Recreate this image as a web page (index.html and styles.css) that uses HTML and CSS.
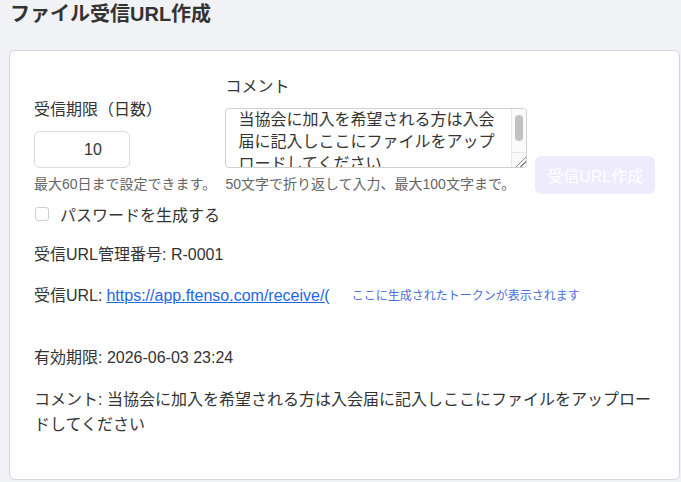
FILE: index.html
```html
<!DOCTYPE html>
<html lang="ja">
<head>
<meta charset="utf-8">
<title>ファイル受信URL作成</title>
<link rel="stylesheet" href="styles.css">
</head>
<body>
<h1 class="title">ファイル受信URL作成</h1>
<div class="card">
  <div class="form-row">
    <div class="field field-days">
      <label class="label">受信期限（日数）</label>
      <input class="days-input" type="text" value="10">
      <div class="help">最大60日まで設定できます。</div>
    </div>
    <div class="field field-comment">
      <label class="label">コメント</label>
      <div class="textarea-wrap">
        <textarea class="comment-input">当協会に加入を希望される方は入会届に記入しここにファイルをアップロードしてください</textarea>
        <div class="fake-scroll"><div class="fake-thumb"></div></div>
        <div class="fake-corner"></div>
      </div>
      <div class="help">50文字で折り返して入力、最大100文字まで。</div>
    </div>
    <button class="submit" type="button">受信URL作成</button>
  </div>
  <label class="check-row">
    <input class="check" type="checkbox">
    <span>パスワードを生成する</span>
  </label>
  <div class="result">
    <div class="line line-id">受信URL管理番号: R-0001</div>
    <div class="line line-url">受信URL: <a class="url" href="#">https://app.ftenso.com/receive/(</a><span class="token">ここに生成されたトークンが表示されます</span></div>
    <div class="line line-expiry">有効期限: 2026-06-03 23:24</div>
    <div class="line line-comment">コメント: 当協会に加入を希望される方は入会届に記入しここにファイルをアップロードしてください</div>
  </div>
</div>
</body>
</html>
```

FILE: styles.css
```css
html, body {
  margin: 0;
  padding: 0;
  background: #f0f2f5;
  height: 100%;
  overflow: hidden;
}
body {
  font-family: "Liberation Sans", "Noto Sans CJK JP", sans-serif;
  color: #333;
  font-size: 16px;
  padding-left: 10px;
}
.title {
  margin: 0 0 22px 0;
  font-size: 20px;
  line-height: 28px;
  font-weight: bold;
  color: #333;
}
.card {
  margin-left: -1px;
  width: 621px;
  height: 402px;
  background: #fff;
  border: 1px solid #d6d6d6;
  border-radius: 6px;
  padding: 26px 24px 0 24px;
}
.form-row {
  display: flex;
  align-items: flex-end;
  gap: 8px;
}
.field {
  display: flex;
  flex-direction: column;
}
.field-days { width: 184px; }
.field-comment { width: 302px; }
.label {
  font-size: 16px;
  line-height: 20px;
  color: #333;
  margin-bottom: 11px;
}
.days-input {
  box-sizing: border-box;
  width: 96px;
  height: 37px;
  border: 1px solid #d9d9d9;
  border-radius: 6px;
  font-family: inherit;
  font-size: 16px;
  color: #333;
  text-align: center;
  padding: 0 0 0 22px;
  outline: none;
}
.textarea-wrap {
  position: relative;
  width: 302px;
  height: 60px;
}
.comment-input {
  display: block;
  box-sizing: border-box;
  width: 302px;
  height: 60px;
  margin: 0;
  border: 1px solid #d0d0d0;
  border-radius: 4px;
  font-family: inherit;
  font-size: 16px;
  line-height: 22px;
  color: #333;
  padding: 0 28px 0 12px;
  overflow: hidden;
  resize: none;
  outline: none;
}
.fake-scroll {
  position: absolute;
  right: 1px;
  top: 1px;
  width: 14px;
  height: 44px;
  background: #fafafa;
  border-left: 1px solid #e6e6e6;
  border-top-right-radius: 3px;
}
.fake-thumb {
  margin: 6px 0 0 3px;
  width: 8px;
  height: 26px;
  border-radius: 4px;
  background: #c1c1c1;
}
.fake-corner {
  position: absolute;
  right: 1px;
  bottom: 1px;
  width: 14px;
  height: 14px;
  background: #fafafa;
  border-left: 1px solid #e6e6e6;
  border-top: 1px solid #e6e6e6;
  border-bottom-right-radius: 3px;
  background-image: linear-gradient(135deg, transparent 0 62%, #888 62% 67%, transparent 67% 78%, #888 78% 83%, transparent 83%);
}
.help {
  margin-top: 7px;
  font-size: 14px;
  line-height: 18px;
  color: #666;
  white-space: nowrap;
}
.submit {
  box-sizing: border-box;
  width: 120px;
  height: 38px;
  border: none;
  border-radius: 6px;
  background: #eeebfd;
  color: #fff;
  font-family: inherit;
  font-size: 16px;
  margin-bottom: -1px;
}
.check-row {
  display: flex;
  align-items: center;
  gap: 11px;
  margin-top: 10px;
  height: 22px;
  font-size: 16px;
  padding-left: 1px;
}
.check {
  -webkit-appearance: none;
  appearance: none;
  margin: 0;
  width: 14px;
  height: 14px;
  border: 1px solid #cfcfcf;
  border-radius: 3px;
  background: #fff;
}
.result {
  display: flex;
  flex-direction: column;
}
.line {
  font-size: 16px;
  line-height: 22px;
  color: #333;
}
.line-id { margin-top: 19px; }
.line-url {
  margin-top: 19px;
  display: flex;
  align-items: center;
  white-space: nowrap;
}
.url {
  display: inline-block;
  max-width: 226px;
  overflow: hidden;
  white-space: nowrap;
  color: #1f66e5;
  text-decoration: underline;
  margin-left: 4px;
}
.token {
  margin-left: 22px;
  font-size: 12px;
  color: #4a6ee0;
}
.line-expiry { margin-top: 40px; }
.line-comment {
  margin-top: 18px;
  line-height: 25px;
}
```
